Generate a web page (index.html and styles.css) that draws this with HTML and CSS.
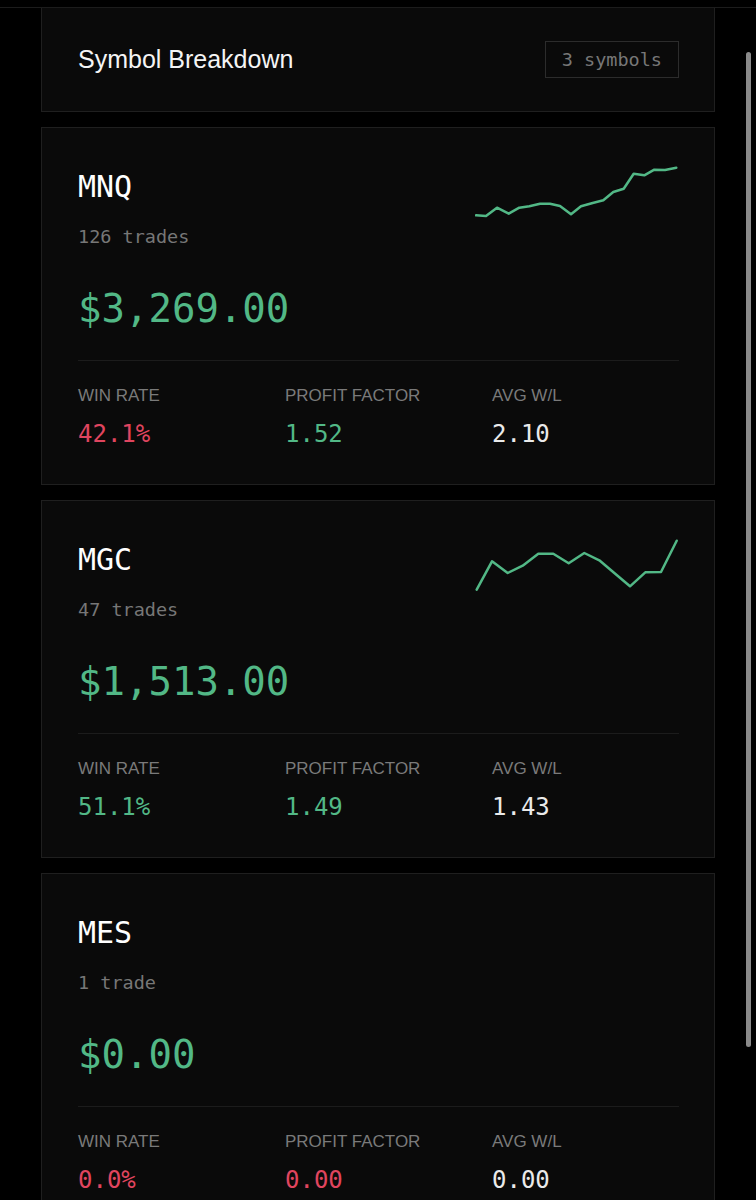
FILE: index.html
```html
<!DOCTYPE html>
<html lang="en">
<head>
    <meta charset="UTF-8">
    <meta name="viewport" content="width=device-width, initial-scale=1.0">
    <title>Symbol Breakdown</title>
    <link rel="stylesheet" href="styles.css">
</head>
<body>
    <div class="topbar"></div>

    <main class="page">
        <section class="card header-card">
            <h2>Symbol Breakdown</h2>
            <span class="badge">3 symbols</span>
        </section>

        <!-- MNQ -->
        <section class="card symbol-card">
            <div class="symbol-top">
                <div>
                    <h3 class="symbol">MNQ</h3>
                    <p class="trades">126 trades</p>
                </div>
                <svg class="spark" width="204" height="56" viewBox="0 0 204 56">
                    <polyline points="1,51.3 11,52 22,43.7 33.7,49.7 44.3,43.7 54.3,42.3 65,39.7 75,39.7 85,42 96,50.3 106,42.3 117.7,39 128.3,36.3 138.3,28 148.7,24.7 158.7,9.7 169.3,11.3 179.3,5.7 190,6 201.3,3.7" />
                </svg>
            </div>
            <p class="pnl green">$3,269.00</p>
            <div class="stats">
                <div class="stat">
                    <span class="label">WIN RATE</span>
                    <span class="value red">42.1%</span>
                </div>
                <div class="stat">
                    <span class="label">PROFIT FACTOR</span>
                    <span class="value green">1.52</span>
                </div>
                <div class="stat">
                    <span class="label">AVG W/L</span>
                    <span class="value">2.10</span>
                </div>
            </div>
        </section>

        <!-- MGC -->
        <section class="card symbol-card">
            <div class="symbol-top">
                <div>
                    <h3 class="symbol">MGC</h3>
                    <p class="trades">47 trades</p>
                </div>
                <svg class="spark" width="204" height="56" viewBox="0 0 204 56">
                    <polyline points="1.7,52.7 17,24.3 32.7,36 47.7,28.7 63.3,16.7 78.3,16.7 93.7,26.3 109.3,16 124.3,23.3 139.3,36 155,49.3 170.3,35.3 186,35 201.7,3.7" />
                </svg>
            </div>
            <p class="pnl green">$1,513.00</p>
            <div class="stats">
                <div class="stat">
                    <span class="label">WIN RATE</span>
                    <span class="value green">51.1%</span>
                </div>
                <div class="stat">
                    <span class="label">PROFIT FACTOR</span>
                    <span class="value green">1.49</span>
                </div>
                <div class="stat">
                    <span class="label">AVG W/L</span>
                    <span class="value">1.43</span>
                </div>
            </div>
        </section>

        <!-- MES -->
        <section class="card symbol-card">
            <div class="symbol-top">
                <div>
                    <h3 class="symbol">MES</h3>
                    <p class="trades">1 trade</p>
                </div>
            </div>
            <p class="pnl green">$0.00</p>
            <div class="stats">
                <div class="stat">
                    <span class="label">WIN RATE</span>
                    <span class="value red">0.0%</span>
                </div>
                <div class="stat">
                    <span class="label">PROFIT FACTOR</span>
                    <span class="value red">0.00</span>
                </div>
                <div class="stat">
                    <span class="label">AVG W/L</span>
                    <span class="value">0.00</span>
                </div>
            </div>
        </section>
    </main>

    <div class="scroll-thumb"></div>
</body>
</html>
```

FILE: styles.css
```css
/* General Styles */
body {
    margin: 0;
    background: #000;
    color: #f2f2f2;
    font-family: "Liberation Sans", Arial, sans-serif;
    overflow: hidden;
}

.topbar {
    height: 7px;
    border-bottom: 1px solid #1c1c1c;
}

.page {
    padding: 0 41px;
    display: flex;
    flex-direction: column;
    gap: 15px;
}

.card {
    background: #0a0a0a;
    border: 1px solid #1f1f1f;
}

/* Header */
.header-card {
    border-top: none;
    height: 104px;
    padding: 0 35px 0 36px;
    display: flex;
    align-items: center;
    justify-content: space-between;
    box-sizing: border-box;
}

.header-card h2 {
    margin: 0;
    font-size: 25px;
    font-weight: 500;
    color: #f5f5f5;
}

.badge {
    font-family: "DejaVu Sans Mono", monospace;
    font-size: 18.5px;
    line-height: 21px;
    color: #777;
    padding: 7px 16px;
    border: 1px solid #2c2c2c;
}

/* Symbol cards */
.symbol-card {
    padding: 41px 35px 35px 36px;
}

.symbol-top {
    display: flex;
    justify-content: space-between;
    align-items: flex-start;
}

.symbol {
    margin: 0;
    font-family: "DejaVu Sans Mono", monospace;
    font-size: 30px;
    line-height: 36px;
    font-weight: normal;
    color: #fff;
}

.trades {
    margin: 21px 0 0;
    font-family: "DejaVu Sans Mono", monospace;
    font-size: 18.5px;
    line-height: 22px;
    color: #777;
}

.spark {
    margin-top: -5px;
}

.spark polyline {
    fill: none;
    stroke: #52b886;
    stroke-width: 2.5;
    stroke-linejoin: round;
    stroke-linecap: round;
}

.pnl {
    margin: 37px 0 0;
    font-family: "DejaVu Sans Mono", monospace;
    font-size: 39px;
    line-height: 47px;
}

.stats {
    margin-top: 28px;
    padding-top: 25px;
    border-top: 1px solid #1c1c1c;
    display: grid;
    grid-template-columns: repeat(3, 207px);
}

.stat {
    display: flex;
    flex-direction: column;
    gap: 14px;
}

.label {
    font-size: 17px;
    line-height: 20px;
    color: #7a7a7a;
}

.value {
    font-family: "DejaVu Sans Mono", monospace;
    font-size: 24px;
    line-height: 29px;
    color: #eaeaea;
}

.green {
    color: #52b886;
}

.red {
    color: #e0455f;
}

/* fake overlay scrollbar */
.scroll-thumb {
    position: fixed;
    top: 52px;
    left: 746px;
    width: 5px;
    height: 995px;
    border-radius: 3px;
    background: #8a8a8a;
}
```
